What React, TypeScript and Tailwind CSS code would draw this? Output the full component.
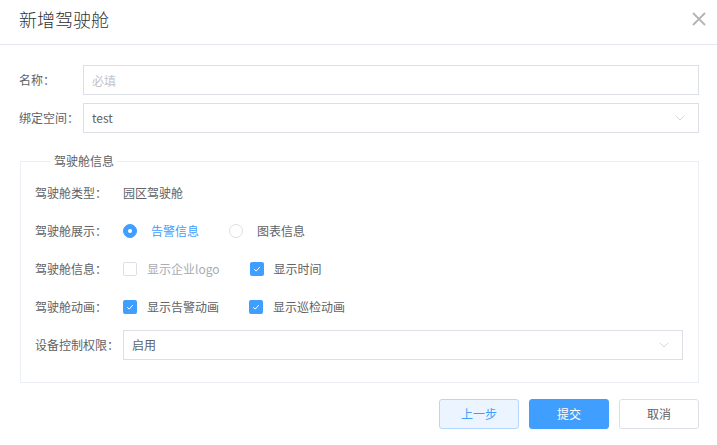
import React, { useState } from 'react';
import { ChevronDown } from 'lucide-react';

const Radio: React.FC<{ checked: boolean; label: string; onClick: () => void }> = ({ checked, label, onClick }) => (
  <label className="flex items-center mr-[30px] cursor-pointer" onClick={onClick}>
    {checked ? (
      <span className="w-[14px] h-[14px] rounded-full bg-[#409eff] border border-[#409eff] flex items-center justify-center">
        <span className="w-[4px] h-[4px] rounded-full bg-white" />
      </span>
    ) : (
      <span className="w-[14px] h-[14px] rounded-full bg-white border border-[#dcdfe6]" />
    )}
    <span className={`ml-[14px] ${checked ? 'text-[#409eff]' : 'text-[#606266]'}`}>{label}</span>
  </label>
);

const Checkbox: React.FC<{ checked: boolean; label: string; disabled?: boolean; onClick?: () => void }> = ({
  checked,
  label,
  disabled,
  onClick,
}) => (
  <label className="flex items-center mr-[30px] cursor-pointer" onClick={disabled ? undefined : onClick}>
    {checked ? (
      <span className="w-[14px] h-[14px] rounded-[2px] bg-[#409eff] flex items-center justify-center">
        <svg width="10" height="10" viewBox="0 0 10 10" fill="none">
          <path d="M2.2 5.2 4.2 7.1 7.9 3" stroke="white" strokeWidth="1" />
        </svg>
      </span>
    ) : (
      <span className="w-[14px] h-[14px] rounded-[2px] bg-white border border-[#dcdfe6]" />
    )}
    <span className={`ml-[10px] ${disabled ? 'text-[#a8abb2]' : 'text-[#606266]'}`}>{label}</span>
  </label>
);

const SelectBox: React.FC<{ value: string }> = ({ value }) => (
  <div className="flex-1 h-[30px] border border-[#dcdfe6] bg-white flex items-center justify-between pl-[8px] pr-[10px] text-[#606266]">
    <span>{value}</span>
    <ChevronDown size={16} strokeWidth={1} className="text-[#c0c4cc]" />
  </div>
);

export default function App() {
  const [display, setDisplay] = useState<'alarm' | 'chart'>('alarm');
  const [showTime, setShowTime] = useState(true);
  const [alarmAnim, setAlarmAnim] = useState(true);
  const [patrolAnim, setPatrolAnim] = useState(true);

  return (
    <div className="w-[717px] h-[445px] bg-white text-[12px] text-[#606266] font-['Noto_Sans_CJK_SC','Noto_Sans',sans-serif] flex flex-col">
      {/* header */}
      <div className="h-[45px] border-b border-[#e4e7ed] flex items-start justify-between pl-[19px] pr-[11px] pt-[7px]">
        <h1 className="text-[18px] leading-[24px] font-light text-[#303133]">新增驾驶舱</h1>
        <button className="mt-[5px] w-[14px] h-[14px]" aria-label="关闭">
          <svg width="14" height="14" viewBox="0 0 14 14" fill="none">
            <path d="M1 1 13 13M13 1 1 13" stroke="#b4b4b4" strokeWidth="1.8" />
          </svg>
        </button>
      </div>

      {/* body */}
      <div className="pl-[19px] pr-[18px] pt-[20px]">
        <div className="flex flex-col gap-[8px]">
          <div className="flex items-center h-[30px]">
            <span className="w-[64px]">名称：</span>
            <input
              placeholder="必填"
              className="flex-1 h-[30px] border border-[#dcdfe6] px-[8px] outline-none placeholder:text-[#c0c4cc] text-[#606266]"
            />
          </div>
          <div className="flex items-center h-[30px]">
            <span className="w-[64px]">绑定空间：</span>
            <SelectBox value="test" />
          </div>
        </div>

        <fieldset className="mt-[20px] ml-[1px] border border-[#ebeef5] pl-[14px] pr-[15px] pt-[9px] pb-[22px]">
          <legend className="ml-[15px] px-[4px] leading-[16px] text-[#606266]">驾驶舱信息</legend>
          <div className="flex flex-col gap-[8px]">
            <div className="flex items-center h-[30px]">
              <span className="w-[88px]">驾驶舱类型：</span>
              <span>园区驾驶舱</span>
            </div>
            <div className="flex items-center h-[30px]">
              <span className="w-[88px]">驾驶舱展示：</span>
              <Radio checked={display === 'alarm'} label="告警信息" onClick={() => setDisplay('alarm')} />
              <Radio checked={display === 'chart'} label="图表信息" onClick={() => setDisplay('chart')} />
            </div>
            <div className="flex items-center h-[30px]">
              <span className="w-[88px]">驾驶舱信息：</span>
              <Checkbox checked={false} disabled label="显示企业logo" />
              <Checkbox checked={showTime} label="显示时间" onClick={() => setShowTime(!showTime)} />
            </div>
            <div className="flex items-center h-[30px]">
              <span className="w-[88px]">驾驶舱动画：</span>
              <Checkbox checked={alarmAnim} label="显示告警动画" onClick={() => setAlarmAnim(!alarmAnim)} />
              <Checkbox checked={patrolAnim} label="显示巡检动画" onClick={() => setPatrolAnim(!patrolAnim)} />
            </div>
            <div className="flex items-center h-[30px]">
              <span className="w-[88px]">设备控制权限：</span>
              <SelectBox value="启用" />
            </div>
          </div>
        </fieldset>

        {/* footer buttons */}
        <div className="mt-[16px] flex justify-end gap-[10px]">
          <button className="w-[80px] h-[30px] rounded-[3px] border border-[#b3d8ff] bg-[#ecf5ff] text-[#409eff]">上一步</button>
          <button className="w-[80px] h-[30px] rounded-[3px] border border-[#409eff] bg-[#409eff] text-white">提交</button>
          <button className="w-[80px] h-[30px] rounded-[3px] border border-[#dcdfe6] bg-white text-[#606266]">取消</button>
        </div>
      </div>
    </div>
  );
}
